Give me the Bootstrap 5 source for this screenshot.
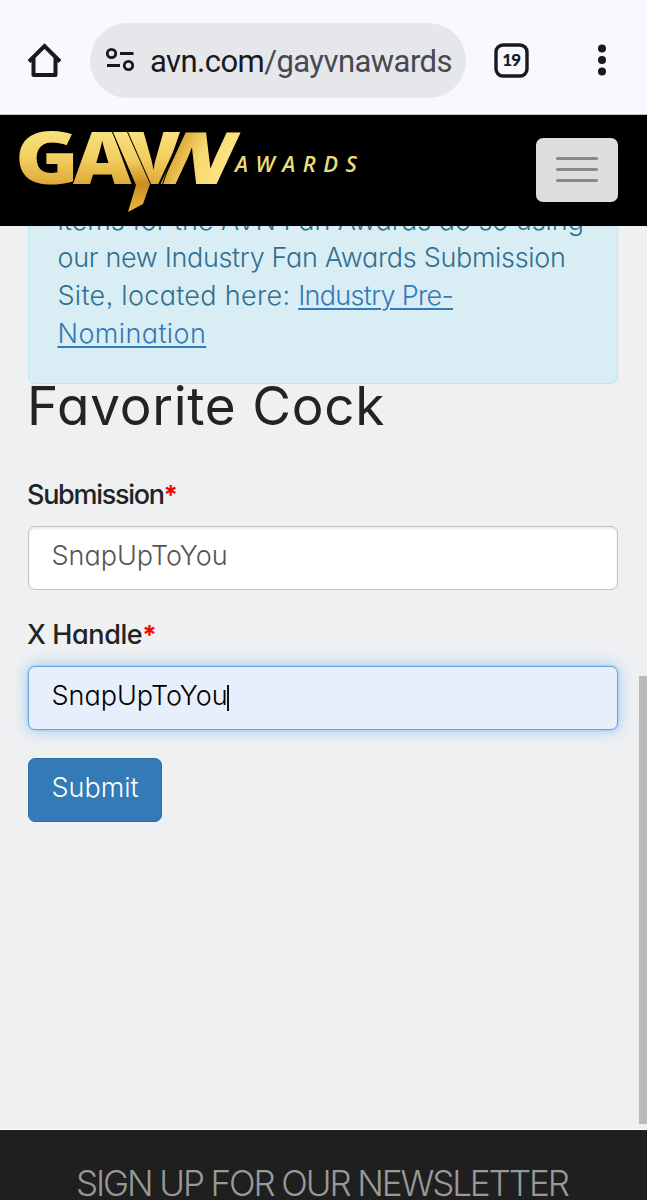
<!DOCTYPE html>
<html lang="en">
<head>
<meta charset="utf-8">
<meta name="viewport" content="width=device-width, initial-scale=1">
<title>GayVN Awards</title>
<link href="https://cdn.jsdelivr.net/npm/bootstrap@5.3.0/dist/css/bootstrap.min.css" rel="stylesheet">
<style>
html,body{height:1200px;overflow:hidden}
body{background:#eff0f2;color:#212325;font-family:Inter,"Liberation Sans",sans-serif;font-size:27px;font-weight:300;line-height:37.7px;font-feature-settings:"cv11","ss03"}
.browser-bar{height:115px;background:#f8f9fe;border-bottom:1px solid #c3c4ca;padding:0 0 0 27px}
.home-icon,.tabs-icon,.more-icon{margin-top:6px}
.tabs-icon{margin-left:27px}
.more-icon{margin-left:68px}
.address{width:376px;height:75px;margin-left:28px;margin-top:6px;padding-left:15px;background:#e6e7eb;border-radius:38px}
.url{font-family:Roboto,sans-serif;font-size:31px;font-weight:400;letter-spacing:-.55px;color:#17191f;margin-left:15px;margin-top:3px;width:302px;overflow:hidden;white-space:nowrap;line-height:42px}
.url span{color:#46494f}
.site-nav{height:111px;background:#000;padding:0 29px 0 0}
.menu-btn{width:82px;height:64px;background:#ddd;border:0;border-radius:7px;padding:0;margin-top:-2px;gap:8.4px}
.menu-btn span{width:42px;height:3px;border-radius:2px;background:#888}
.page{height:904px;padding:0 29px 0 28px;overflow:hidden;border-bottom:1px solid #fff;position:relative}
.notice{margin:-27px 0 0;height:185px;background:#d9edf5;border:1.5px solid #bce8f1;border-radius:7px;color:#31708f;padding:1.5px 28.5px 0;white-space:nowrap}
.notice a{color:#337ab7;text-decoration-thickness:2px;text-underline-offset:3px}
.l1{letter-spacing:-.04px}
.l2{letter-spacing:-.33px}
.l3{letter-spacing:.3px}
.l3 a{letter-spacing:-.7px}
.l4{letter-spacing:.4px}
h1{font-size:53px;font-weight:400;line-height:58px;letter-spacing:.75px;margin:-7px 0 0 -1px;white-space:nowrap}
form{padding-top:41px}
.form-label{height:38px;font-weight:500;margin:0 0 12px -1px;line-height:38px;letter-spacing:-1.3px;white-space:nowrap}
.form-label.handle{letter-spacing:-.4px}
.form-label b{color:#f00;font-weight:700;font-size:26px;line-height:1}
.field{height:64px;border:1.5px solid #c3c3c5;border-radius:7px;padding:10px 22.5px;font-size:27px;font-weight:300;line-height:38px;color:#555;box-shadow:inset 0 2px 2px rgba(0,0,0,.075);margin-bottom:26px}
.field.active-field{background:#e8effc;border-color:#66a3dc;color:#000;box-shadow:0 0 16px rgba(102,175,233,.6),0 0 3px rgba(102,190,245,.7);margin-bottom:28px}
.caret{width:2px;height:26px;background:#111;margin-left:-1px}
.btn-send{width:134px;height:64px;background:#337ab7;border:1.5px solid #2e6da4;border-radius:7px;color:#fff;font-size:27px;font-weight:300;padding:0 0 5px;line-height:38px}
.scroll-thumb{position:absolute;right:0;top:450px;width:8px;height:448px;background:#b8b9bb}
footer{height:70px;background:#1f1f1f;color:#999;font-size:35px;line-height:42px;letter-spacing:-2.1px;padding-top:32px;padding-left:76px;white-space:nowrap;overflow:hidden}
</style>
</head>
<body>
<div class="browser-bar d-flex align-items-center">
  <svg class="home-icon" width="35" height="36" viewBox="0 0 35 36" fill="none" stroke="#17191f" stroke-width="4" stroke-linejoin="round"><path d="M2 19.5 17.5 4 33 19.5" stroke-linejoin="miter"/><path d="M6.5 16v17h22V16"/></svg>
  <div class="address d-flex align-items-center">
    <svg width="30" height="26" viewBox="0 0 30 26" fill="none" stroke="#17191f" stroke-width="2.8"><circle cx="6.5" cy="6.5" r="4.2"/><circle cx="23.5" cy="18.5" r="4.2"/><path d="M15 6.5h13.5M2 18.5h13"/></svg>
    <div class="url">avn.com<span>/gayvnawards</span></div>
  </div>
  <svg class="tabs-icon" width="36" height="36" viewBox="0 0 36 36"><rect x="3" y="3" width="31" height="31" rx="7" fill="none" stroke="#17191f" stroke-width="3.4"/><text x="18.3" y="24.4" text-anchor="middle" font-family="Lato" font-weight="900" font-size="17" letter-spacing="-.7" fill="#17191f">19</text></svg>
  <svg class="more-icon" width="10" height="32" viewBox="0 0 10 32" fill="#17191f"><circle cx="5" cy="4.6" r="4"/><circle cx="5" cy="16" r="4"/><circle cx="5" cy="27.4" r="4"/></svg>
</div>
<nav class="site-nav navbar flex-nowrap">
  <svg width="365" height="111" viewBox="0 0 365 111" role="img">
    <defs>
      <linearGradient id="gold" gradientUnits="userSpaceOnUse" x1="0" y1="-52" x2="0" y2="0"><stop offset="0" stop-color="#f9e07c"/><stop offset=".5" stop-color="#f2ce60"/><stop offset="1" stop-color="#dfaa36"/></linearGradient>
      <linearGradient id="pale" gradientUnits="userSpaceOnUse" x1="0" y1="0" x2="54" y2="0"><stop offset="0" stop-color="#dda936"/><stop offset=".45" stop-color="#f7d970"/><stop offset="1" stop-color="#fde384"/></linearGradient>
      <linearGradient id="tail" gradientUnits="userSpaceOnUse" x1="0" y1="17" x2="0" y2="97"><stop offset="0" stop-color="#f9e07c"/><stop offset=".35" stop-color="#f2ce60"/><stop offset=".65" stop-color="#c98c22"/><stop offset="1" stop-color="#edba3c"/></linearGradient>
    </defs>
    <g fill="url(#gold)" stroke="#000" stroke-width="2" paint-order="stroke" font-family="Open Sans" font-weight="800" font-size="72">
      <text transform="translate(15 69) scale(1.2 1)">G</text>
      <text transform="translate(73 69) scale(1.12 1)">A</text>
      <text transform="translate(160 69) skewX(-25) scale(1.12 1)" fill="url(#pale)" x="-4">N</text>
      <text transform="translate(127 69) scale(1.06 1)">V</text>
      <path fill="url(#tail)" d="M113 17h14l23 52-7 20-15 8 8-27z"/>
    </g>
    <path d="M184 16l-25 54" stroke="#000" stroke-width="2"/>
    <text x="235" y="57" textLength="122" font-family="Open Sans" font-weight="600" font-style="italic" font-size="22" fill="#eadb7b">AWARDS</text>
  </svg>
  <button class="menu-btn d-flex flex-column align-items-center justify-content-center" aria-label="Menu"><span></span><span></span><span></span></button>
</nav>
<main class="page">
  <div class="notice alert"><span class="l1">items for the AVN Fan Awards do so using</span><br><span class="l2">our new Industry Fan Awards Submission</span><br><span class="l3">Site, located here: <a href="#">Industry Pre-</a></span><br><a href="#" class="l4">Nomination</a></div>
  <h1>Favorite Cock</h1>
  <form>
    <label class="form-label d-block">Submission<b>*</b></label>
    <div class="form-control field">SnapUpToYou</div>
    <label class="form-label handle d-block">X Handle<b>*</b></label>
    <div class="form-control field active-field d-flex"><span>SnapUpToYou</span><i class="caret align-self-center"></i></div>
    <button type="button" class="btn btn-send">Submit</button>
  </form>
  <div class="scroll-thumb"></div>
</main>
<footer>SIGN UP FOR OUR NEWSLETTER</footer>
<script src="https://cdn.jsdelivr.net/npm/bootstrap@5.3.0/dist/js/bootstrap.bundle.min.js"></script>
</body>
</html>
